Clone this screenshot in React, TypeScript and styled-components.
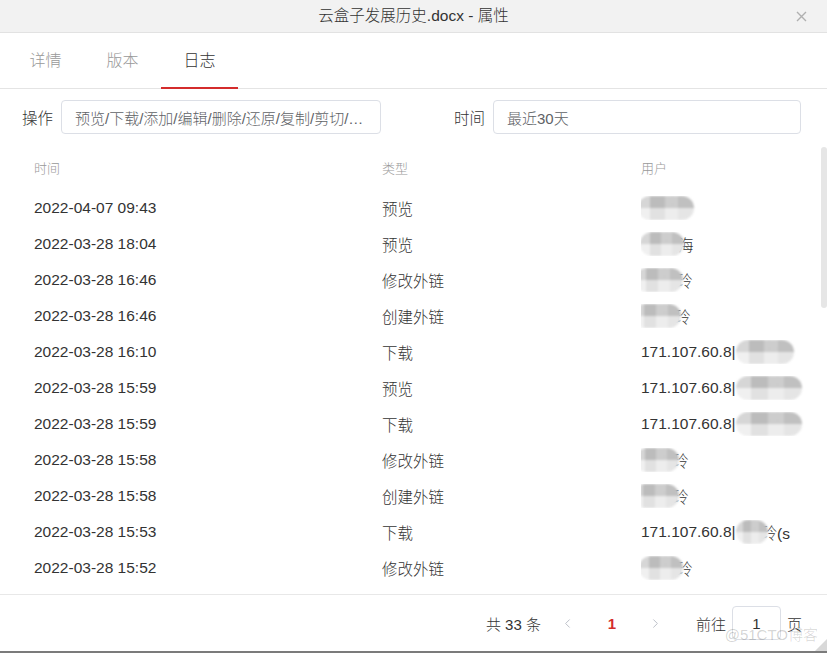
import styled, { createGlobalStyle } from "styled-components"
import { ChevronLeft, ChevronRight } from "lucide-react"

const GlobalStyle = createGlobalStyle`
    html, body {
        margin: 0;
        padding: 0;
        background: #fff;
    }
    body {
        font-family: "Liberation Sans", "Noto Sans CJK SC", sans-serif;
        font-weight: 300;
        color: #333;
    }
    * { box-sizing: border-box; }
`

const Window = styled.div`
    position: relative;
    width: 827px;
    height: 653px;
    display: flex;
    flex-direction: column;
    background: #fff;
    border-bottom: 2px solid #7b7b7b;
    overflow: hidden;
`

const TitleBar = styled.div`
    height: 33px;
    flex: none;
    display: grid;
    grid-template-columns: 1fr auto 1fr;
    align-items: center;
    background: #f2f2f2;
    border-bottom: 1px solid #e2e2e2;
    font-size: 15.5px;
    line-height: 20px;
    color: #333;
`

const Close = styled.button`
    justify-self: end;
    margin-right: 18px;
    width: 16px;
    height: 16px;
    display: flex;
    align-items: center;
    justify-content: center;
    padding: 0;
    border: 0;
    background: none;
    cursor: pointer;
`

const Tabs = styled.div`
    height: 56px;
    flex: none;
    display: flex;
    padding-left: 7px;
    border-bottom: 1px solid #e4e4e4;
`

const Tab = styled.div<{ $active?: boolean }>`
    width: 77px;
    display: flex;
    align-items: center;
    justify-content: center;
    padding-bottom: 2px;
    font-size: 16px;
    color: ${p => (p.$active ? "#333" : "#999")};
    border-bottom: 2px solid ${p => (p.$active ? "#d42c2c" : "transparent")};
    margin-bottom: -1px;
    cursor: pointer;
`

const Filters = styled.div`
    flex: none;
    display: grid;
    grid-template-columns: 359px 347px;
    column-gap: 73px;
    padding: 11px 0 0 22px;
`

const Field = styled.label`
    display: flex;
    align-items: center;
    gap: 8px;
    font-size: 15.5px;
    color: #333;
`

const Select = styled.div`
    flex: 1;
    height: 34px;
    min-width: 0;
    display: flex;
    align-items: center;
    padding: 0 4px 0 13px;
    border: 1px solid #dcdfe6;
    border-radius: 4px;
    font-size: 15px;
    color: #606266;
    white-space: nowrap;
`

const ScrollArea = styled.div`
    flex: 1;
    min-height: 0;
    margin-top: 13px;
    display: flex;
    overflow: hidden;
`

const Table = styled.div`
    flex: 1;
    padding: 2px 0 0 34px;
`

const Row = styled.div<{ $head?: boolean }>`
    display: grid;
    grid-template-columns: 348px 259px 1fr;
    align-items: center;
    height: 36px;
    margin-bottom: ${p => (p.$head ? "5px" : "0")};
    font-size: ${p => (p.$head ? "13px" : "15.5px")};
    color: ${p => (p.$head ? "#999" : "#333")};
    white-space: nowrap;
`

const UserCell = styled.div`
    display: flex;
    align-items: center;
    overflow: hidden;
`

const Blur = styled.span<{ $w: number; $shift?: number }>`
    display: inline-block;
    flex: none;
    width: ${p => p.$w}px;
    height: 24px;
    margin-left: ${p => p.$shift ?? 0}px;
    margin-right: -6px;
    border-radius: 12px;
    background:
        linear-gradient(90deg, rgba(255,255,255,0.3) 0 22%, rgba(0,0,0,0.04) 22% 48%, rgba(255,255,255,0.15) 48% 72%, rgba(0,0,0,0.02) 72% 100%),
        linear-gradient(180deg, #c4c4c4 0 50%, #eaeaea 50% 100%);
    filter: blur(0.8px);
    position: relative;
    z-index: 1;
`

const Track = styled.div`
    width: 6px;
    flex: none;
`

const Thumb = styled.div`
    height: 161px;
    border-radius: 3px;
    background: #e6e6e6;
`

const Footer = styled.div`
    height: 57px;
    flex: none;
    display: flex;
    align-items: center;
    justify-content: flex-end;
    padding: 0 25px 0 0;
    border-top: 1px solid #e8e8e8;
    font-size: 15px;
    color: #333;
`

const Total = styled.span`
    margin-right: 5px;
`

const PageBtn = styled.span<{ $current?: boolean }>`
    width: 44px;
    display: flex;
    align-items: center;
    justify-content: center;
    font-weight: ${p => (p.$current ? 700 : 400)};
    color: ${p => (p.$current ? "#d42c2c" : "#b8bcc4")};
`

const Jump = styled.div`
    display: flex;
    align-items: center;
    gap: 6px;
    margin-left: 18px;
`

const JumpInput = styled.div`
    width: 49px;
    height: 34px;
    display: flex;
    align-items: center;
    justify-content: center;
    border: 1px solid #dcdfe6;
    border-radius: 4px;
`

const Watermark = styled.div`
    position: absolute;
    right: 9px;
    bottom: 7px;
    font-size: 15px;
    color: rgba(0, 0, 0, 0.18);
    pointer-events: none;
`

const Grip = styled.svg`
    position: absolute;
    right: 0;
    bottom: 0;
`

type User = { ip?: boolean; blur: number; shift?: number; tail?: string }

const rows: { time: string; type: string; user: User }[] = [
    { time: "2022-04-07 09:43", type: "预览", user: { blur: 56, shift: -3 } },
    { time: "2022-03-28 18:04", type: "预览", user: { blur: 44, shift: -1, tail: "海" } },
    { time: "2022-03-28 16:46", type: "修改外链", user: { blur: 48, shift: -6, tail: "玲" } },
    { time: "2022-03-28 16:46", type: "创建外链", user: { blur: 48, shift: -8, tail: "玲" } },
    { time: "2022-03-28 16:10", type: "下载", user: { ip: true, blur: 58, tail: ":" } },
    { time: "2022-03-28 15:59", type: "预览", user: { ip: true, blur: 66 } },
    { time: "2022-03-28 15:59", type: "下载", user: { ip: true, blur: 66 } },
    { time: "2022-03-28 15:58", type: "修改外链", user: { blur: 44, shift: -6, tail: "玲" } },
    { time: "2022-03-28 15:58", type: "创建外链", user: { blur: 46, shift: -8, tail: "玲" } },
    { time: "2022-03-28 15:53", type: "下载", user: { ip: true, blur: 32, tail: "玲(s" } },
    { time: "2022-03-28 15:52", type: "修改外链", user: { blur: 44, shift: -2, tail: "玲" } },
]

export default function App() {
    return (
        <>
            <GlobalStyle />
            <Window>
                <TitleBar>
                    <span />
                    <span>云盒子发展历史.docx - 属性</span>
                    <Close aria-label="关闭">
                        <svg width="11" height="11" viewBox="0 0 11 11">
                            <path d="M1 1L10 10M10 1L1 10" stroke="#b0b0b0" strokeWidth="1.4" />
                        </svg>
                    </Close>
                </TitleBar>
                <Tabs>
                    <Tab>详情</Tab>
                    <Tab>版本</Tab>
                    <Tab $active>日志</Tab>
                </Tabs>
                <Filters>
                    <Field>
                        操作
                        <Select>预览/下载/添加/编辑/删除/还原/复制/剪切/…</Select>
                    </Field>
                    <Field>
                        时间
                        <Select>最近30天</Select>
                    </Field>
                </Filters>
                <ScrollArea>
                    <Table>
                        <Row $head>
                            <span>时间</span>
                            <span>类型</span>
                            <span>用户</span>
                        </Row>
                        {rows.map((r, i) => (
                            <Row key={i}>
                                <span>{r.time}</span>
                                <span>{r.type}</span>
                                <UserCell>
                                    {r.user.ip && <span>171.107.60.8|</span>}
                                    <Blur $w={r.user.blur} $shift={r.user.shift} />
                                    {r.user.tail && <span>{r.user.tail}</span>}
                                </UserCell>
                            </Row>
                        ))}
                    </Table>
                    <Track>
                        <Thumb />
                    </Track>
                </ScrollArea>
                <Footer>
                    <Total>共 33 条</Total>
                    <PageBtn><ChevronLeft size={15} strokeWidth={1.5} /></PageBtn>
                    <PageBtn $current>1</PageBtn>
                    <PageBtn><ChevronRight size={15} strokeWidth={1.5} /></PageBtn>
                    <Jump>
                        前往
                        <JumpInput>1</JumpInput>
                        页
                    </Jump>
                </Footer>
                <Watermark>@51CTO博客</Watermark>
                <Grip width="12" height="12" viewBox="0 0 12 12">
                    <path d="M12 0V12H0Z" fill="#d8d8d8" />
                </Grip>
            </Window>
        </>
    )
}
